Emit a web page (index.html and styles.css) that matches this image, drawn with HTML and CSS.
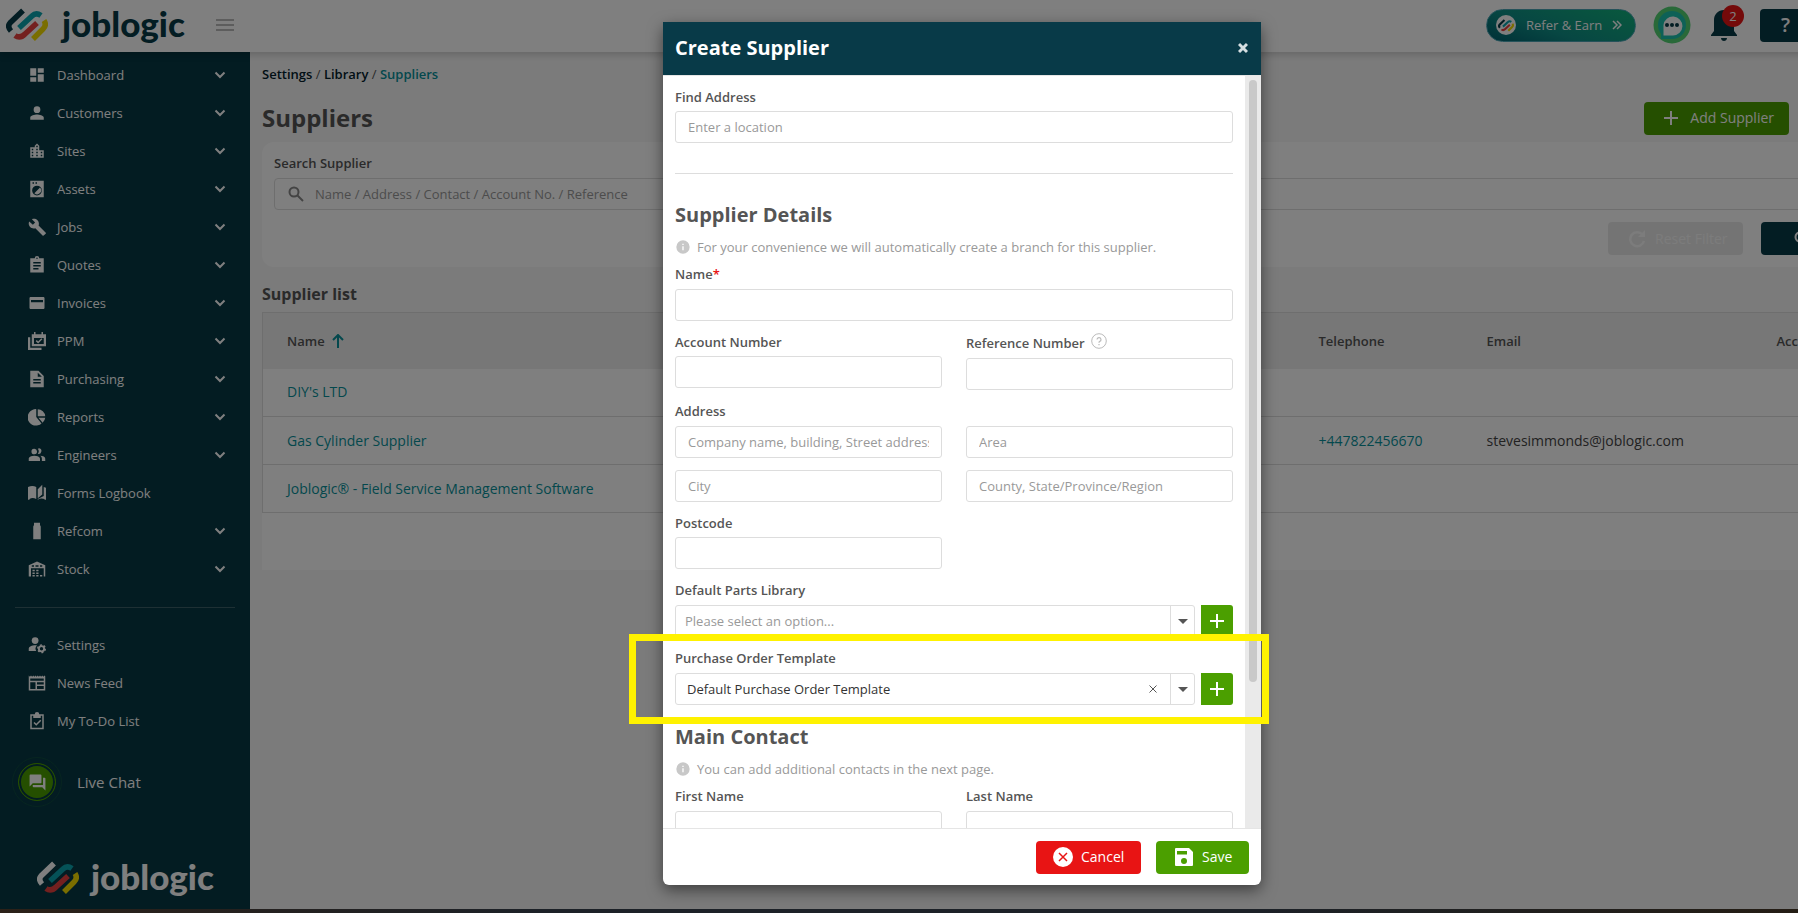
FILE: index.html
```html
<!DOCTYPE html>
<html lang="en">
<head>
<meta charset="utf-8">
<title>Suppliers - Joblogic</title>
<link rel="stylesheet" href="styles.css">
</head>
<body>
<svg class="defs" aria-hidden="true">
  <symbol id="mark" viewBox="0 0 42 34">
    <g fill="none" stroke-width="5.500">
      <path d="M17 2.500 4 15Q1 18.500 5 23" stroke="var(--mark-lead)"/>
      <path d="M13 20 26 8Q30 4 35 7.500" stroke="#0aa5ae"/>
      <path d="M31 15 19 26Q14 31 9 27.500" stroke="#e8403f"/>
      <path d="M38 12.500Q41 17 37 21L27 31" stroke="#f5dc00"/>
    </g>
  </symbol>
  <symbol id="chev" viewBox="0 0 12 12"><path d="M1.500 3.500 6 8l4.500-4.500" fill="none" stroke="currentColor" stroke-width="2"/></symbol>
  <symbol id="info" viewBox="0 0 24 24"><path d="M12 2a10 10 0 1 0 0 20 10 10 0 0 0 0-20zm1 15h-2v-6h2zm0-8h-2V7h2z"/></symbol>
  <symbol id="plus" viewBox="0 0 16 16"><path d="M8 1v14M1 8h14" fill="none" stroke="currentColor" stroke-width="2"/></symbol>
</svg>

<div class="app">
  <header class="topbar">
    <a class="logo" href="#"><svg class="logo-mark"><use href="#mark"/></svg><span>joblogic</span></a>
    <button class="burger" aria-label="Toggle menu"><span></span><span></span><span></span></button>
    <div class="actions">
      <a class="refer" href="#"><span class="refer-mark"><svg><use href="#mark"/></svg></span>Refer &amp; Earn
        <svg class="refer-arrow" viewBox="0 0 10 10"><path d="M1 1l4 4-4 4M5 1l4 4-4 4" fill="none" stroke="currentColor" stroke-width="1.500"/></svg></a>
      <button class="chat" aria-label="Messages"><svg viewBox="0 0 38 38"><circle cx="19" cy="19" r="18.500" fill="#52d273"/><circle cx="19" cy="19" r="14" fill="#1dc3ae"/><path d="M8 33V19h11v14z" fill="#1dc3ae"/><path d="M10.500 29.500V19a9.500 9.500 0 1 1 9.500 10.500z" fill="#fff"/><g fill="#073a47"><circle cx="14" cy="19" r="2"/><circle cx="19" cy="19" r="2"/><circle cx="24" cy="19" r="2"/></g></svg></button>
      <button class="bell" aria-label="Notifications"><svg viewBox="0 0 26 32"><path d="M13 1c-6 0-10 4.500-10 10v11l-3 4v1h26v-1l-3-4V11C23 5.500 19 1 13 1zM10 29h6c0 2-1.500 3-3 3s-3-1-3-3z"/></svg><span class="badge">2</span></button>
      <button class="help">?</button>
    </div>
  </header>

  <div class="main">
    <nav class="sidebar">
      <ul class="menu">
        <li><a href="#"><svg class="ico" viewBox="0 0 24 24"><path d="M3 13h8V3H3zm0 8h8v-6H3zm10 0h8V11h-8zm0-18v6h8V3z"/></svg><span>Dashboard</span><svg class="chev"><use href="#chev"/></svg></a></li>
        <li><a href="#"><svg class="ico" viewBox="0 0 24 24"><path d="M12 12a4.500 4.500 0 1 0 0-9 4.500 4.500 0 0 0 0 9zm0 2c-3 0-9 1.340-9 4v3h18v-3c0-2.660-6-4-9-4z"/></svg><span>Customers</span><svg class="chev"><use href="#chev"/></svg></a></li>
        <li><a href="#"><svg class="ico" viewBox="0 0 24 24"><path fill-rule="evenodd" d="M15 11V5l-3-3-3 3v2H3v14h18V11zM7 19H5v-2h2zm0-4H5v-2h2zm0-4H5V9h2zm6 8h-2v-2h2zm0-4h-2v-2h2zm0-4h-2V9h2zm0-4h-2V5h2zm6 12h-2v-2h2zm0-4h-2v-2h2z"/></svg><span>Sites</span><svg class="chev"><use href="#chev"/></svg></a></li>
        <li><a href="#"><svg class="ico" viewBox="0 0 24 24"><path fill-rule="evenodd" d="M3 1h18v22H3zM6 3v2h2V3zm4 0v2h2V3zm2 4.500a6.500 6.500 0 1 0 0 13 6.500 6.500 0 0 0 0-13zM16 10a5 5 0 0 1-7.500 7.500z"/></svg><span>Assets</span><svg class="chev"><use href="#chev"/></svg></a></li>
        <li><a href="#"><svg class="ico" viewBox="0 0 24 24"><path d="M23.700 19.500l-9.600-9.600c.9-2.300.4-5-1.500-6.900-2-2-5-2.400-7.400-1.300L9.500 6l-3 3L1.600 4.700C.4 7.100.9 10.100 2.900 12.100c1.900 1.900 4.600 2.400 6.900 1.500l9.600 9.600c.4.4 1 .4 1.400 0l2.800-2.300c.5-.4.5-1.100.1-1.400z"/></svg><span>Jobs</span><svg class="chev"><use href="#chev"/></svg></a></li>
        <li><a href="#"><svg class="ico" viewBox="0 0 24 24"><path fill-rule="evenodd" d="M15 3a3 3 0 0 0-6 0H3v19h18V3zm-3-1a1 1 0 1 1 0 2 1 1 0 0 1 0-2zm2 16H7v-2h7zm3-4H7v-2h10zm0-4H7V8h10z"/></svg><span>Quotes</span><svg class="chev"><use href="#chev"/></svg></a></li>
        <li><a href="#"><svg class="ico" viewBox="0 0 24 24"><path fill-rule="evenodd" d="M3 4h18l1 1v14l-1 1H3l-1-1V5zm1 4v3h16V8z"/></svg><span>Invoices</span><svg class="chev"><use href="#chev"/></svg></a></li>
        <li><a href="#"><svg class="ico" viewBox="0 0 24 24"><path fill-rule="evenodd" d="M5 3h3V0h2v3h8V0h2v3h4v16H5zm3 5v8h13V8z"/><path d="M0 7h3v14h15v3H0z"/><path d="M11 11.500l2.500 2.500 5-5" fill="none" stroke="currentColor" stroke-width="2"/></svg><span>PPM</span><svg class="chev"><use href="#chev"/></svg></a></li>
        <li><a href="#"><svg class="ico" viewBox="0 0 24 24"><path fill-rule="evenodd" d="M14 1H3v22h18V8zm3 17H7v-2h10zm0-4H7v-2h10zm-4-5V3.500L18.500 9z"/></svg><span>Purchasing</span><svg class="chev"><use href="#chev"/></svg></a></li>
        <li><a href="#"><svg class="ico" viewBox="0 0 24 24"><path d="M11 1.500V12l7 8.500A11 11 0 1 1 11 1.500zM13 1.500A10.500 10.500 0 0 1 23 11H13zM14 13h9a10 10 0 0 1-3.500 6.500z"/></svg><span>Reports</span><svg class="chev"><use href="#chev"/></svg></a></li>
        <li><a href="#"><svg class="ico" viewBox="0 0 24 24"><path d="M16 17v3H1v-3s0-4 7.500-4 7.500 4 7.500 4M12 7a3.700 3.700 0 1 0-3.500 4A3.700 3.700 0 0 0 12 7m4.500 6A5.320 5.320 0 0 1 18.500 17v3H23v-3s0-3.630-6.500-4M15 3a3.400 3.400 0 0 0-1.930.59 5.500 5.500 0 0 1 0 6.820A3.700 3.700 0 1 0 15 3z"/></svg><span>Engineers</span><svg class="chev"><use href="#chev"/></svg></a></li>
        <li><a href="#"><svg class="ico" viewBox="0 0 24 24"><path d="M0 4q6-3 11 0v16q-5-3-9 0v1H0zM13 7l6-6v13l-6 5zM21 4l3 1v16h-2v-1q-5-2-9 1v-1l8-4z"/></svg><span>Forms Logbook</span></a></li>
        <li><a href="#"><svg class="ico" viewBox="0 0 24 24"><path d="M8 1h8v3l1 2v17H7V6l1-2z"/></svg><span>Refcom</span><svg class="chev"><use href="#chev"/></svg></a></li>
        <li><a href="#"><svg class="ico" viewBox="0 0 24 24"><path fill-rule="evenodd" d="M1 22V7l11-5 11 5v15h-2V11H4v11zM5 7v2h3V7zm5 0v2h4V7zm6 0v2h3V7z"/><path d="M6 13h3v2H6zm5 0h3v2h-3zM6 16.500h3v2H6zm5 0h3v2h-3zM6 20h3v2H6zm5 0h3v2h-3zm5 0h3v2h-3z"/></svg><span>Stock</span><svg class="chev"><use href="#chev"/></svg></a></li>
      </ul>
      <hr class="side-rule">
      <ul class="menu">
        <li><a href="#"><svg class="ico" viewBox="0 0 24 24"><circle cx="9.500" cy="6" r="4.500"/><path d="M12 12.500a6 6 0 0 0-1 7.500H1v-3c0-3 5-5 11-4.500z"/><circle cx="18" cy="17" r="3.500" fill="none" stroke="currentColor" stroke-width="2.500"/><circle cx="18" cy="17" r="5" fill="none" stroke="currentColor" stroke-width="2" stroke-dasharray="2.600 2.600"/></svg><span>Settings</span></a></li>
        <li><a href="#"><svg class="ico" viewBox="0 0 24 24"><path fill-rule="evenodd" d="M1 2l1.500 1.500L4 2l1.500 1.500L7 2l1.500 1.500L10 2l1.500 1.500L13 2l1.500 1.500L16 2l1.500 1.500L19 2l1.500 1.500L22 2l1 1v19H1zm2 4v3h18V6zm0 5v9h7v-9zm9 0v3h9v-3zm0 5v4h9v-4z"/></svg><span>News Feed</span></a></li>
        <li><a href="#"><svg class="ico" viewBox="0 0 24 24"><path fill-rule="evenodd" d="M9 3a3 3 0 0 1 6 0h6v20H3V3zM5 5v16h14V5h-2v3H7V5z"/><path d="M8 14l3 3 6-6" fill="none" stroke="currentColor" stroke-width="2"/></svg><span>My To-Do List</span></a></li>
      </ul>
      <a class="live" href="#"><span class="live-ring"><span class="live-dot"><svg class="live-ico" viewBox="0 0 24 24"><path d="M21 6h-2v9H6v2c0 .55.450 1 1 1h11l4 4V7c0-.55-.45-1-1-1zm-4 6V3c0-.55-.45-1-1-1H3c-.55 0-1 .45-1 1v14l4-4h10c.55 0 1-.45 1-1z"/></svg></span></span>Live Chat</a>
      <a class="logo side-logo" href="#"><svg class="logo-mark"><use href="#mark"/></svg><span>joblogic</span></a>
    </nav>

    <main class="content">
      <div class="crumbs"><a href="#">Settings</a> / <a href="#">Library</a> / <a href="#" class="teal">Suppliers</a></div>
      <div class="title-row"><h1>Suppliers</h1><button class="btn green"><svg class="btn-plus"><use href="#plus"/></svg>Add Supplier</button></div>
      <section class="filter">
        <label for="q">Search Supplier</label>
        <div class="search"><svg viewBox="0 0 16 16"><circle cx="6" cy="6" r="4.500" fill="none" stroke="currentColor" stroke-width="2"/><path d="M9.500 9.500 15 15" stroke="currentColor" stroke-width="2"/></svg><input id="q" type="text" placeholder="Name / Address / Contact / Account No. / Reference"></div>
        <div class="filter-actions">
          <button class="btn reset" disabled><svg viewBox="0 0 18 18"><path d="M14.500 4.500A7 7 0 1 0 16 11" fill="none" stroke="currentColor" stroke-width="2.500"/><path d="M17 0v7h-7z" fill="currentColor"/></svg>Reset Filter</button>
          <button class="btn navy" aria-label="Search"><svg viewBox="0 0 16 16"><circle cx="6" cy="6" r="4.500" fill="none" stroke="currentColor" stroke-width="2"/><path d="M9.500 9.500 15 15" stroke="currentColor" stroke-width="2"/></svg></button>
        </div>
      </section>
      <h2>Supplier list</h2>
      <div class="list">
        <table>
          <colgroup><col><col class="c-tel"><col class="c-mail"><col class="c-acc"></colgroup>
          <thead><tr><th>Name <svg class="sort" viewBox="0 0 12 14"><path d="M6 14V1.500M1 6l5-5 5 5" fill="none" stroke="currentColor" stroke-width="2"/></svg></th><th>Telephone</th><th>Email</th><th>Account Number</th></tr></thead>
          <tbody>
            <tr><td><a href="#">DIY's LTD</a></td><td></td><td></td><td></td></tr>
            <tr><td><a href="#">Gas Cylinder Supplier</a></td><td><a href="#">+447822456670</a></td><td>stevesimmonds@joblogic.com</td><td></td></tr>
            <tr><td><a href="#">Joblogic® - Field Service Management Software</a></td><td></td><td></td><td></td></tr>
          </tbody>
        </table>
      </div>
    </main>
  </div>
</div>

<div class="backdrop">
  <form class="modal" role="dialog" aria-labelledby="dlg">
    <div class="modal-head"><h2 id="dlg">Create Supplier</h2><button type="button" class="close" aria-label="Close"><svg viewBox="0 0 10 12"><path d="M1 2l8 8M9 2l-8 8" stroke="currentColor" stroke-width="3"/></svg></button></div>
    <div class="modal-body">
      <div class="fields">
        <div class="field"><label for="find">Find Address</label><input id="find" type="text" placeholder="Enter a location"></div>
        <hr>
        <h3>Supplier Details</h3>
        <p class="note"><svg><use href="#info"/></svg>For your convenience we will automatically create a branch for this supplier.</p>
        <div class="field name"><label for="name">Name<span class="req">*</span></label><input id="name" type="text"></div>
        <div class="pair">
          <div class="field"><label for="acc">Account Number</label><input id="acc" type="text"></div>
          <div class="field"><label class="tall" for="ref">Reference Number <svg class="tip" viewBox="0 0 16 16"><circle cx="8" cy="8" r="7.300" fill="none" stroke="currentColor"/><path d="M6 6.500a2 2 0 1 1 2.500 2Q8 9 8 9.800M8 11v1.200" fill="none" stroke="currentColor" stroke-width="1.200"/></svg></label><input id="ref" type="text"></div>
        </div>
        <div class="address">
          <label for="a1">Address</label>
          <div class="grid">
            <input id="a1" type="text" placeholder="Company name, building, Street address" aria-label="Company name, building, Street address">
            <input type="text" placeholder="Area" aria-label="Area">
            <input type="text" placeholder="City" aria-label="City">
            <input type="text" placeholder="County, State/Province/Region" aria-label="County, State/Province/Region">
          </div>
        </div>
        <div class="pair"><div class="field"><label for="pc">Postcode</label><input id="pc" type="text"></div></div>
        <div class="field stacked"><label for="lib">Default Parts Library</label>
          <div class="combo"><div class="pick"><select id="lib" class="empty"><option>Please select an option...</option></select><span class="caret"></span></div><button type="button" class="add" aria-label="Add parts library"><svg><use href="#plus"/></svg></button></div></div>
        <div class="field stacked"><label for="po">Purchase Order Template</label>
          <div class="combo"><div class="pick"><select id="po"><option>Default Purchase Order Template</option></select><button type="button" class="clear" aria-label="Clear"><svg viewBox="0 0 8 8"><path d="M.5.5l7 7M7.500.5l-7 7" stroke="currentColor"/></svg></button><span class="caret"></span></div><button type="button" class="add" aria-label="Add template"><svg><use href="#plus"/></svg></button></div></div>
        <h3 class="contact">Main Contact</h3>
        <p class="note"><svg><use href="#info"/></svg>You can add additional contacts in the next page.</p>
        <div class="pair name">
          <div class="field"><label for="fn">First Name</label><input id="fn" type="text"></div>
          <div class="field"><label for="ln">Last Name</label><input id="ln" type="text"></div>
        </div>
      </div>
      <div class="track"><div class="thumb"></div></div>
    </div>
    <div class="modal-foot">
      <button type="button" class="btn red"><svg viewBox="0 0 20 20"><circle cx="10" cy="10" r="10" fill="#fff"/><path d="M6 6l8 8M14 6l-8 8" stroke="#e81414" stroke-width="1.500"/></svg>Cancel</button>
      <button type="submit" class="btn green save"><svg viewBox="0 0 20 20"><path fill="#fff" fill-rule="evenodd" d="M2 1h13l4 4v13a1 1 0 0 1-1 1H2a1 1 0 0 1-1-1V2a1 1 0 0 1 1-1zm1 3v3.500h10V4zm7 7a3 3 0 1 0 0 6 3 3 0 0 0 0-6z"/></svg>Save</button>
    </div>
    <div class="highlight"></div>
  </form>
</div>
<div class="desk"></div>
</body>
</html>
```

FILE: styles.css
```css
*{box-sizing:border-box}
body{margin:0;height:100vh;overflow:hidden;position:relative;background:#f7f7f7;font-family:"Open Sans","Noto Sans",sans-serif;font-size:13px;line-height:18px;color:#555}
a{color:inherit;text-decoration:none}
button,input,select{font:inherit;color:inherit}
button{border:0;padding:0;background:none}
h1,h2,h3,p,ul{margin:0;padding:0}
.defs{position:absolute;width:0;height:0}

/* The workspace runs wider than the window */
.app{width:calc(100% + 126px);height:calc(100vh - 4px);display:flex;flex-direction:column;overflow:hidden}
.topbar{height:52px;flex:none;display:flex;align-items:center;background:#fff;box-shadow:0 2px 8px rgba(0,0,0,.2);z-index:1;padding:0 0 2px 6px}
.logo{display:flex;align-items:center;gap:14px;--mark-lead:#073a47;color:#073a47;font:900 35px/34px Lato,sans-serif}
.logo span{padding-bottom:4px}
.logo-mark{width:42px;height:34px}
.burger{margin-left:31px;width:18px;display:flex;flex-direction:column;gap:3px}
.burger span{height:2px;background:#bbb}
.actions{margin-left:auto;display:flex;align-items:center}
.refer{width:150px;height:33px;border-radius:17px;border:1px solid #4aa5b5;background:linear-gradient(20deg,#00606f,#0f8f86 40%,#12b27c);color:#fff;display:flex;align-items:center;padding-left:9px;gap:10px;font-size:13px;font-weight:500;--mark-lead:#073a47}
.refer-mark{width:20px;height:20px;border-radius:50%;background:#fff;display:grid;place-items:center}
.refer-mark svg{width:16px;height:13px}
.refer-arrow{width:10px;height:10px}
.chat{margin-left:17px;width:38px;height:38px}
.chat svg{width:38px;height:38px;display:block}
.bell{margin-left:20px;position:relative;width:26px;height:32px}
.bell svg{width:26px;height:32px;fill:#073a47;display:block}
.badge{position:absolute;left:11px;top:-4px;width:22px;height:22px;border-radius:50%;background:#e81414;color:#fff;line-height:22px;text-align:center}
.help{margin:0 113px 0 23px;width:51px;height:33px;border-radius:4px;background:#073a47;color:#fff;font-size:20px;font-weight:600}

.main{flex:1;display:flex;min-height:0}
.sidebar{width:250px;flex:none;background:#063844;color:#fff;padding-top:4px;display:flex;flex-direction:column}
.menu{list-style:none;font-weight:500}
.menu a{height:38px;display:flex;align-items:center;padding:0 24px 0 27px;gap:10px}
.ico{width:20px;height:20px;fill:currentColor;flex:none;padding:1px}
.menu span{flex:1}
.chev{width:12px;height:12px}
.side-rule{margin:19px 15px 18px;width:220px;border:0;border-top:1px solid #3c6069}
.live{display:flex;align-items:center;gap:15px;padding-left:12px;margin-top:17px;font-size:15px}
.live-ring{width:50px;height:50px;border-radius:50%;border:1px solid #0e4a41;display:grid;place-items:center}
.live-dot{width:38px;height:38px;border-radius:50%;border:1px solid #4b9f00;box-shadow:inset 0 0 0 2px #063844;background:#4b9f00;display:grid;place-items:center}
.live-ico{width:19px;height:19px;fill:#fff}
.side-logo{margin:auto 0 12px 37px;--mark-lead:#fff;color:#fff;gap:12px}

.content{flex:1;min-width:0;padding:13px 0 0 12px}
.crumbs{color:#555}
.crumbs a{color:#02202b;font-weight:600}
.crumbs .teal,td a{color:#08919a}
.title-row{display:flex;align-items:center;justify-content:space-between;margin:18px 135px 7px 0}
h1{font-size:24px;line-height:34px;font-weight:700}
.btn{height:33px;border-radius:4px;color:#fff;display:flex;align-items:center;font-size:14px}
.green{background:#4b9f00}
.title-row .btn{padding:0 15px 0 19px;gap:11px}
.btn-plus{width:16px;height:16px}
.filter{background:#fff;border-radius:12px 0 0 12px;height:125px;padding:12px}
.filter label{font-weight:600;display:block;margin-bottom:6px}
.search{height:32px;border:1px solid #ddd;border-radius:4px;display:flex;align-items:center;padding-left:13px;gap:11px}
.search svg{width:16px;height:16px;color:#888}
.search input{border:0;outline:0;flex:1;padding:0;background:none}
::placeholder{color:#999;opacity:1}
.filter-actions{display:flex;justify-content:flex-end;gap:18px;margin-top:12px;margin-right:44px}
.reset{background:#e9e9e9;color:#f8f8f8;width:135px;padding-left:20px;gap:9px;font-weight:500}
.reset svg{width:18px;height:18px}
.navy{background:#073a47;width:107px;padding-left:33px}
.navy svg{width:16px;height:16px}
.content h2{font-size:16px;line-height:22px;font-weight:700;margin:16px 0 7px}
.list{background:#fff;padding-bottom:57px}
table{width:100%;border-collapse:collapse;table-layout:fixed;border:1px solid #ddd;font-size:14px}
.c-tel{width:168px}.c-mail{width:290px}.c-acc{width:147px}
th,td{text-align:left;padding:0 0 0 24px}
th{height:56px;background:#eee;font-size:13px;font-weight:600}
td{height:48px;border-bottom:1px solid #ddd}
td:nth-child(3){color:#444}
th:not(:first-child),td:not(:first-child){padding-left:0}
.sort{width:12px;height:14px;color:#08919a;margin-left:4px;vertical-align:-2px}

.backdrop{position:absolute;inset:0 0 4px 0;background:rgba(0,0,0,.5);padding:22px 0 24px 126px;display:flex;justify-content:center;z-index:2}
.modal{position:relative;width:598px;display:flex;flex-direction:column;background:#fff;border-radius:6px;box-shadow:0 5px 15px rgba(0,0,0,.5)}
.modal-head{background:#083a48;color:#fff;height:53px;flex:none;display:flex;align-items:center;justify-content:space-between;padding:0 13px 2px 12px}
.modal-head h2{font-size:20px;line-height:28px;font-weight:700}
.close{width:10px;height:12px;color:#d5dfe2}
.close svg{display:block}
.modal-body{flex:1;min-height:0;display:flex;border-top:1px solid #e5e5e5}
.fields{flex:1;overflow:hidden;padding:12px 12px 0}
.track{width:16px;background:#eaeaea;padding:4px}
.thumb{height:602px;border-radius:4px;background:#c9c9c9}
.fields label{display:block;font-weight:600;margin-bottom:5px}
.fields input,.fields select{display:block;width:100%;height:32px;border:1px solid #ddd;border-radius:3px;padding:0 12px;background:#fff;outline:0}
.fields hr{border:0;border-top:1px solid #ddd;margin:30px 0 27px}
h3{font-size:20px;line-height:28px;font-weight:700}
.note{color:#999;display:flex;align-items:center;gap:6px;margin-top:9px}
.note svg{width:16px;height:16px;fill:#c8c8c8}
.req{color:#e81414}
.pair{display:grid;grid-template-columns:1fr 1fr;gap:24px;margin-top:12px}
.name{margin-top:9px}
.fields .name label{margin-bottom:6px}
.fields .tall{line-height:20px}
.tip{width:16px;height:16px;color:#bbb;margin-left:3px;vertical-align:-1px}
.address{margin-top:12px}
.fields .address label{margin-bottom:6px}
.grid{display:grid;grid-template-columns:1fr 1fr;gap:12px 24px}
.stacked{margin-top:12px}
.fields .stacked label{margin-bottom:6px}
.combo{display:flex;gap:6px}
.pick{flex:1;position:relative}
.fields .pick select{appearance:none;color:#333;padding-left:11px}
.fields .pick .empty{color:#999;padding-left:9px}
.caret{position:absolute;right:0;top:1px;bottom:1px;width:25px;border-left:1px solid #ddd;display:grid;place-items:center;pointer-events:none}
.caret::after{content:"";border:5px solid transparent;border-top-color:#555;border-bottom:0}
.clear{position:absolute;right:38px;top:12px;width:8px;height:8px;color:#555}
.clear svg{display:block;width:8px;height:8px}
.add{width:32px;height:32px;border-radius:0 3px 3px 0;background:#4b9f00;color:#fff;display:grid;place-items:center}
.add svg{width:16px;height:16px}
.contact{margin-top:18px}
.modal-foot{height:57px;flex:none;border-top:1px solid #e5e5e5;display:flex;align-items:center;justify-content:flex-end;gap:15px;padding-right:12px}
.modal-foot svg{width:20px;height:20px}
.red{background:#e81414;width:105px;padding-left:17px;gap:8px}
.save{width:93px;padding-left:18px;gap:8px}
.highlight{position:absolute;top:612px;left:-34px;right:-8px;height:90px;border:7px solid #fff200;pointer-events:none}
.desk{position:absolute;left:0;right:0;bottom:0;height:4px;background:linear-gradient(90deg,#2c2118,#1c2127 30%,#1c2127 70%,#241d14)}
```
